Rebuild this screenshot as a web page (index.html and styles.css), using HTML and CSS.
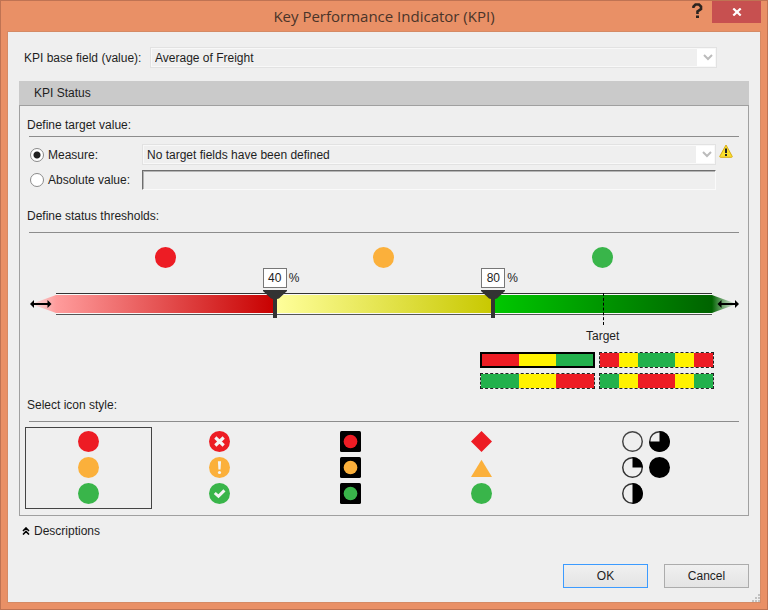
FILE: index.html
```html
<!DOCTYPE html>
<html lang="en">
<head>
  <meta charset="UTF-8">
  <meta name="viewport" content="width=device-width, initial-scale=1.0">
  <title>Key Performance Indicator (KPI)</title>
  <link rel="stylesheet" href="styles.css">
</head>
<body>
  <div class="dialog">
    <header class="titlebar">
      <h1>Key Performance Indicator (KPI)</h1>
      <div class="window-btns">
        <button class="help-btn" aria-label="Help">
          <svg width="11" height="16" viewBox="0 0 11 16"><path d="M1.5 5V3.5L3.5 1.500H7L9 3.500V6L5.500 8.500V11" fill="none" stroke="#2b2420" stroke-width="2.600"/><rect x="4" y="12.500" width="3" height="2.500" fill="#2b2420"/></svg>
        </button>
        <button class="close-btn" aria-label="Close">
          <svg width="10" height="8" viewBox="0 0 10 8"><path d="M1.300 0.500L8.700 7.500M8.700 0.500L1.300 7.500" stroke="#fff" stroke-width="2.200"/></svg>
        </button>
      </div>
    </header>

    <main class="client">
      <div class="base-row">
        <label for="base-field">KPI base field (value):</label>
        <div class="combo">
          <select id="base-field"><option>Average of Freight</option></select>
          <svg class="chevron" width="10" height="7" viewBox="0 0 10 7"><path d="M1 1L5 5L9 1" fill="none" stroke="#bcbcbc" stroke-width="2"/></svg>
        </div>
      </div>

      <div class="tab">KPI Status</div>
      <div class="panel">
        <h2 class="first">Define target value:</h2>
        <hr>
        <div class="target-grid">
          <label><input type="radio" name="target" checked>Measure:</label>
          <div class="combo">
            <select aria-label="Measure"><option>No target fields have been defined</option></select>
            <svg class="chevron" width="10" height="7" viewBox="0 0 10 7"><path d="M1 1L5 5L9 1" fill="none" stroke="#bcbcbc" stroke-width="2"/></svg>
          </div>
          <svg class="warning" width="14" height="14" viewBox="0 0 14 14">
            <path d="M7 1L13.300 12.500Q13.300 13.300 12.500 13.300H1.500Q0.700 13.300 0.700 12.500Z" fill="#fbe02c" stroke="#d9ad16" stroke-linejoin="round"/>
            <path d="M7 4.500V9" stroke="#222" stroke-width="2"/><rect x="6" y="10" width="2" height="2" fill="#222"/>
          </svg>
          <label><input type="radio" name="target">Absolute value:</label>
          <input class="abs-value" type="text" aria-label="Absolute value">
        </div>

        <h2>Define status thresholds:</h2>
        <hr>
        <div class="gauge">
          <svg class="tip" width="26" height="28" viewBox="0 0 26 28">
            <defs><linearGradient id="tipRed"><stop offset="0" stop-color="#ff9c9c" stop-opacity="0.200"/><stop offset="1" stop-color="#ff9c9c"/></linearGradient></defs>
            <path d="M26 5V23L22 21.500L1 14L22 6.500Z" fill="url(#tipRed)"/>
            <path d="M2 14H20" stroke="#000" stroke-width="2"/>
            <path d="M0 14L4 10V18ZM21.500 14L17.500 10V18Z"/>
          </svg>
          <div class="zone">
            <span class="dot red"></span>
            <div class="value"></div>
            <div class="track"><div class="fill fill-red"></div></div>
          </div>
          <div class="zone">
            <span class="dot amber"></span>
            <label class="value"><input type="text" value="40">%</label>
            <div class="track"><div class="fill fill-yellow"></div></div>
            <svg class="thumb" width="24" height="28" viewBox="0 0 24 28"><path d="M0 0H24V1L16 8.500L14 9V28H10V9L8 8.500L0 1Z" fill="#333"/></svg>
          </div>
          <div class="zone">
            <span class="dot green"></span>
            <label class="value"><input type="text" value="80">%</label>
            <div class="track"><div class="fill fill-green"></div></div>
            <svg class="thumb" width="24" height="28" viewBox="0 0 24 28"><path d="M0 0H24V1L16 8.500L14 9V28H10V9L8 8.500L0 1Z" fill="#333"/></svg>
            <span class="target-line"></span>
            <span class="target-label">Target</span>
          </div>
          <svg class="tip" width="26" height="28" viewBox="0 0 26 28">
            <defs><linearGradient id="tipGreen"><stop offset="0" stop-color="#006300"/><stop offset="1" stop-color="#4f934f" stop-opacity="0.100"/></linearGradient></defs>
            <path d="M0 5V23L4 21.500L25 14L4 6.500Z" fill="url(#tipGreen)"/>
            <path d="M8 14H25" stroke="#000" stroke-width="2"/>
            <path d="M5.500 14L9.500 10V18ZM27 14L23 10V18Z"/>
          </svg>
        </div>

        <div class="palettes">
          <button class="palette selected" aria-label="Red yellow green"><i class="r"></i><i class="y"></i><i class="g"></i></button>
          <button class="palette" aria-label="Red yellow green yellow red"><i class="r"></i><i class="y"></i><i class="g wide"></i><i class="y"></i><i class="r"></i></button>
          <button class="palette" aria-label="Green yellow red"><i class="g"></i><i class="y"></i><i class="r"></i></button>
          <button class="palette" aria-label="Green yellow red yellow green"><i class="g"></i><i class="y"></i><i class="r wide"></i><i class="y"></i><i class="g"></i></button>
        </div>

        <h2>Select icon style:</h2>
        <hr>
        <div class="styles">
          <button class="style selected" aria-label="Circles">
            <span class="icons">
              <span class="dot red"></span>
              <span class="dot amber"></span>
              <span class="dot green"></span>
            </span>
          </button>
          <button class="style" aria-label="Symbols">
            <span class="icons">
              <svg width="21" height="21" viewBox="0 0 20 20"><circle cx="10" cy="10" r="10" fill="#ed1c24"/><path d="M6 6.200L14 13.800M14 6.200L6 13.800" stroke="#f4f4f4" stroke-width="3"/></svg>
              <svg width="21" height="21" viewBox="0 0 20 20"><circle cx="10" cy="10" r="10" fill="#fbb03b"/><path d="M8.500 4H11.500L11 12H9Z" fill="#f4f4f4"/><circle cx="10" cy="14.800" r="1.500" fill="#f4f4f4"/></svg>
              <svg width="21" height="21" viewBox="0 0 20 20"><circle cx="10" cy="10" r="10" fill="#39b54a"/><path d="M5.500 9.500L9 12.700L14.700 7" fill="none" stroke="#f4f4f4" stroke-width="2.800"/></svg>
            </span>
          </button>
          <button class="style" aria-label="Traffic lights">
            <span class="icons">
              <svg width="21" height="21" viewBox="0 0 20 20"><rect width="20" height="20" rx="1.500"/><circle cx="10" cy="10" r="6.500" fill="#ed1c24"/></svg>
              <svg width="21" height="21" viewBox="0 0 20 20"><rect width="20" height="20" rx="1.500"/><circle cx="10" cy="10" r="6.500" fill="#fbb03b"/></svg>
              <svg width="21" height="21" viewBox="0 0 20 20"><rect width="20" height="20" rx="1.500"/><circle cx="10" cy="10" r="6.500" fill="#39b54a"/></svg>
            </span>
          </button>
          <button class="style" aria-label="Shapes">
            <span class="icons">
              <svg width="21" height="21" viewBox="0 0 20 20"><path d="M10 0L20 10L10 20L0 10Z" fill="#ed1c24"/></svg>
              <svg width="21" height="21" viewBox="0 0 20 20"><path d="M10 2.500L20 19H0Z" fill="#fbb03b"/></svg>
              <svg width="21" height="21" viewBox="0 0 20 20"><circle cx="10" cy="10" r="10" fill="#39b54a"/></svg>
            </span>
          </button>
          <button class="style" aria-label="Quarters">
            <span class="icons">
              <svg width="21" height="21" viewBox="0 0 20 20"><circle cx="10" cy="10" r="9.300" fill="none" stroke="#444" stroke-width="1.400"/></svg>
              <svg width="21" height="21" viewBox="0 0 20 20"><circle cx="10" cy="10" r="9.300" fill="none" stroke="#333" stroke-width="1.400"/><path d="M10 10V0A10 10 0 0 1 20 10Z"/></svg>
              <svg width="21" height="21" viewBox="0 0 20 20"><circle cx="10" cy="10" r="9.300" fill="none" stroke="#333" stroke-width="1.400"/><path d="M10 0A10 10 0 0 1 10 20Z"/></svg>
            </span>
            <span class="icons">
              <svg width="21" height="21" viewBox="0 0 20 20"><circle cx="10" cy="10" r="9.300" fill="none" stroke="#333" stroke-width="1.400"/><path d="M10 10V0A10 10 0 1 1 0 10Z"/></svg>
              <svg width="21" height="21" viewBox="0 0 20 20"><circle cx="10" cy="10" r="10"/></svg>
            </span>
          </button>
        </div>
      </div>

      <button class="descriptions">
        <svg width="8" height="8" viewBox="0 0 8 8"><path d="M1 4L4 1L7 4M1 7.500L4 4.500L7 7.500" fill="none" stroke="#000" stroke-width="1.600"/></svg>
        Descriptions
      </button>

      <footer class="actions">
        <button class="btn default">OK</button>
        <button class="btn">Cancel</button>
      </footer>
      <svg class="grip" width="8" height="8" viewBox="0 0 8 8"><path d="M6 0h2v2h-2zM3 3h2v2h-2zM6 3h2v2h-2zM0 6h2v2h-2zM3 6h2v2h-2zM6 6h2v2h-2z" fill="#c2c2c2"/></svg>
    </main>
  </div>
</body>
</html>
```

FILE: styles.css
```css
:root{--frame:#e99066;--face:#efefef;--line:#a0a0a0;--red:#ed1c24;--amber:#fbb03b;--green:#39b54a}
*,*::before,*::after{box-sizing:border-box;margin:0;padding:0}
body{font-family:"Liberation Sans",Arial,sans-serif;font-size:12px;color:#1e1e1e;background:var(--frame)}
button,input,select{font:inherit;color:inherit}
button{background:none;border:none}
svg{display:block}

.dialog{min-height:100vh;display:flex;flex-direction:column;background:var(--frame);border:1px solid #bf7353;padding:0 6px 6px}
.titlebar{position:relative;height:30px;display:flex;align-items:center;justify-content:center}
.titlebar h1{font-family:"Open Sans","Noto Sans",sans-serif;font-size:15px;font-weight:400;color:#4a3429}
.window-btns{position:absolute;top:0;right:0;display:flex;gap:9px}
.help-btn{height:22px;padding-bottom:2px}
.close-btn{width:49px;height:22px;background:#c75050;display:flex;align-items:center;justify-content:center}

.client{position:relative;flex:1;display:flex;flex-direction:column;background:var(--face);border:1px solid #d58a65;padding:15px 11px 14px}
.base-row{display:grid;grid-template-columns:126px 1fr;align-items:center;padding:0 32px 0 5px}
.combo{position:relative}
.combo select{display:block;width:100%;height:21px;appearance:none;padding:0 24px 0 4px;border:1px solid #e2e2e2;border-radius:0;background:linear-gradient(#fff,#fff) right/19px 100% no-repeat,var(--face);box-shadow:inset 0 0 0 1px #f8f8f8}
.chevron{position:absolute;right:4px;top:7px}

.tab{height:24px;margin-top:13px;padding-left:15px;line-height:24px;background:#cacaca}
.panel{border:1px solid var(--line);padding-bottom:6px}
.panel h2{font-size:12px;font-weight:400;line-height:22px;padding:15px 7px 5px}
.panel h2.first{padding:8px 7px 0}
.panel hr{border:none;height:1px;background:#8c8c8c;margin:0 9px}

.target-grid{display:grid;grid-template-columns:112px 1fr 29px;row-gap:5px;align-items:center;padding:7px 0 0 10px}
.target-grid label{display:flex;align-items:center;gap:4px;white-space:nowrap}
.target-grid input[type=radio]{appearance:none;width:14px;height:14px;border:1px solid #8a8a8a;border-radius:50%;background:#fff}
.target-grid input[type=radio]:checked{background:radial-gradient(circle,#222 0 3px,#fff 4px)}
.target-grid .combo{margin-right:3px}
.warning{align-self:start}
.abs-value{height:20px;width:calc(100% - 3px);padding:0 4px;background:var(--face);border:1px solid #fafafa;border-top-color:#6e6e6e;border-left-color:#6e6e6e;box-shadow:inset 1px 1px #b4b4b4}

.gauge{display:grid;grid-template-columns:26px 1fr 1fr 1fr 26px;padding:14px 10px 0}
.tip{margin-top:43px;overflow:visible}
.zone{position:relative;display:flex;flex-direction:column;align-items:center}
.dot{display:block;width:21px;height:21px;border-radius:50%}
.red{background:var(--red)}
.amber{background:var(--amber)}
.green{background:var(--green)}
.value{align-self:flex-start;display:flex;align-items:center;gap:2px;height:20px;margin:0 0 5px -12px}
.value input{width:24px;height:20px;text-align:center;background:#fff;border:1px solid #777}
.track{align-self:stretch;height:22px;padding:1px 0;border-top:1px solid #333;border-bottom:1px solid #555;background:#f8f8f8}
.fill{height:18px}
.fill-red{background:linear-gradient(90deg,#ff9c9c,#c80000)}
.fill-yellow{background:linear-gradient(90deg,#ffff9c,#c8c800)}
.fill-green{background:linear-gradient(90deg,#00c800,#006300)}
.thumb{position:absolute;left:-12px;top:43px}
.target-line{position:absolute;left:50%;top:46px;height:32px;border-left:1px dashed #000}
.target-label{margin-top:12px;line-height:18px}

.palettes{display:grid;grid-template-columns:115px 115px;gap:5px 4px;justify-content:end;padding:7px 34px 0 0}
.palette{height:16px;display:flex;border:1px dashed #222}
.palette.selected{border:2px solid #000}
.palette i{flex:1;align-self:stretch}
.palette .wide{flex:2}
.r{background:#ed1c24}
.y{background:#fff200}
.g{background:#22b14c}

.palettes + h2{padding-top:5px}
.styles{display:grid;grid-template-columns:repeat(4,127px) 1fr;gap:4px;padding:5px 5px 0}
.style{height:82px;display:flex;justify-content:center;gap:6px;padding:3px 0;border:1px solid transparent}
.style.selected{border-color:#444}
.icons{display:flex;flex-direction:column;gap:5px}

.descriptions{align-self:flex-start;display:flex;align-items:center;gap:4px;margin-top:6px;padding-left:3px;line-height:18px}
.actions{margin-top:auto;display:flex;justify-content:flex-end;gap:16px}
.btn{width:85px;height:24px;background:linear-gradient(#f0f0f0,#e4e4e4);border:1px solid #acacac}
.btn.default{border-color:#3c9bff}
.grip{position:absolute;right:0;bottom:0}
```
